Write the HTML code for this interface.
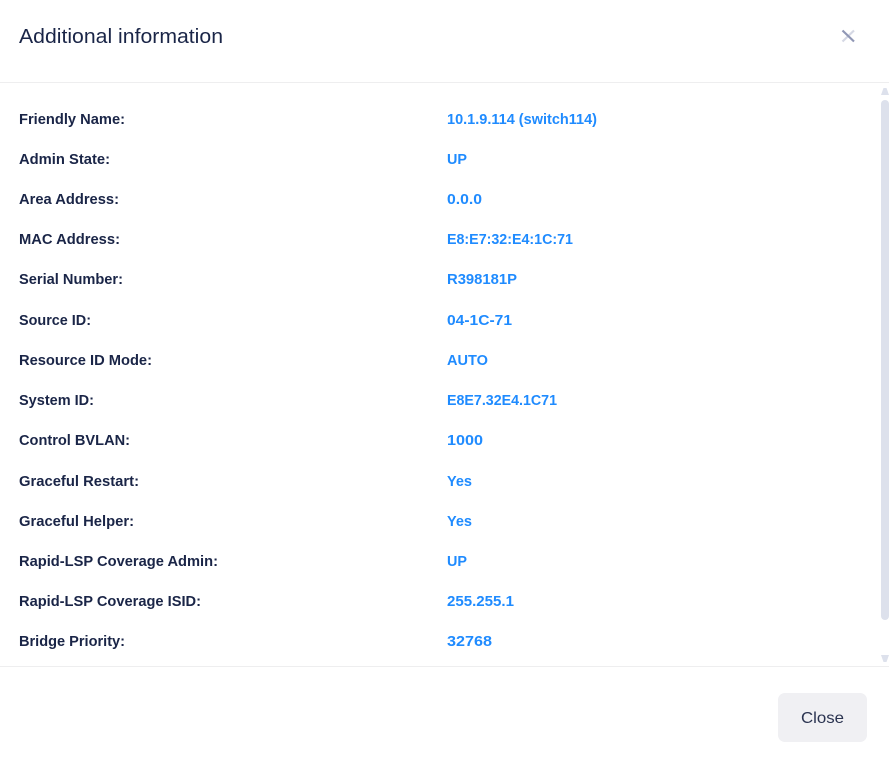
<!DOCTYPE html>
<html>
<head>
<meta charset="utf-8">
<style>
html,body{margin:0;padding:0;background:#fff;width:889px;height:765px;overflow:hidden}
svg{display:block;position:absolute;left:0;top:0}
text{font-family:"Liberation Sans",sans-serif}
.l{font-size:14.5px;font-weight:700;fill:#1a2547}
.v{font-size:14.5px;font-weight:700;fill:#1f8bff}
</style>
</head>
<body>
<svg width="889" height="765" viewBox="0 0 889 765" xmlns="http://www.w3.org/2000/svg">
<rect x="0" y="82" width="889" height="1" fill="#eeeeef"/>
<rect x="0" y="666" width="889" height="1" fill="#eeeeef"/>
<text x="19" y="43" font-size="20" fill="#1a2547" textLength="204" lengthAdjust="spacingAndGlyphs">Additional information</text>
<path d="M854 30.500L842.500 41.500" stroke="#d5d8e4" stroke-width="2.200"/>
<path d="M842.500 30.500L854 41.500" stroke="#9097b5" stroke-width="2.200"/>

<path d="M881 95L883.500 88L886.500 88L889 95Z" fill="#dde1ec"/>
<rect x="881" y="100" width="8" height="520" rx="4" fill="#dde1ec"/>
<path d="M881 655L889 655L886.500 662L883.500 662Z" fill="#dde1ec"/>

<text class="l" x="19" y="124" textLength="106" lengthAdjust="spacingAndGlyphs">Friendly Name:</text>
<text class="v" x="447" y="124" textLength="150" lengthAdjust="spacingAndGlyphs">10.1.9.114 (switch114)</text>
<text class="l" x="19" y="164" textLength="91" lengthAdjust="spacingAndGlyphs">Admin State:</text>
<text class="v" x="447" y="164" textLength="20" lengthAdjust="spacingAndGlyphs">UP</text>
<text class="l" x="19" y="204" textLength="100" lengthAdjust="spacingAndGlyphs">Area Address:</text>
<text class="v" x="447" y="204" textLength="35" lengthAdjust="spacingAndGlyphs">0.0.0</text>
<text class="l" x="19" y="244" textLength="101" lengthAdjust="spacingAndGlyphs">MAC Address:</text>
<text class="v" x="447" y="244" textLength="126" lengthAdjust="spacingAndGlyphs">E8:E7:32:E4:1C:71</text>
<text class="l" x="19" y="284" textLength="104" lengthAdjust="spacingAndGlyphs">Serial Number:</text>
<text class="v" x="447" y="284" textLength="70" lengthAdjust="spacingAndGlyphs">R398181P</text>
<text class="l" x="19" y="325" textLength="72" lengthAdjust="spacingAndGlyphs">Source ID:</text>
<text class="v" x="447" y="325" textLength="65" lengthAdjust="spacingAndGlyphs">04-1C-71</text>
<text class="l" x="19" y="365" textLength="133" lengthAdjust="spacingAndGlyphs">Resource ID Mode:</text>
<text class="v" x="447" y="365" textLength="41" lengthAdjust="spacingAndGlyphs">AUTO</text>
<text class="l" x="19" y="405" textLength="75" lengthAdjust="spacingAndGlyphs">System ID:</text>
<text class="v" x="447" y="405" textLength="110" lengthAdjust="spacingAndGlyphs">E8E7.32E4.1C71</text>
<text class="l" x="19" y="445" textLength="111" lengthAdjust="spacingAndGlyphs">Control BVLAN:</text>
<text class="v" x="447" y="445" textLength="36" lengthAdjust="spacingAndGlyphs">1000</text>
<text class="l" x="19" y="486" textLength="120" lengthAdjust="spacingAndGlyphs">Graceful Restart:</text>
<text class="v" x="447" y="486" textLength="25" lengthAdjust="spacingAndGlyphs">Yes</text>
<text class="l" x="19" y="526" textLength="115" lengthAdjust="spacingAndGlyphs">Graceful Helper:</text>
<text class="v" x="447" y="526" textLength="25" lengthAdjust="spacingAndGlyphs">Yes</text>
<text class="l" x="19" y="566" textLength="199" lengthAdjust="spacingAndGlyphs">Rapid-LSP Coverage Admin:</text>
<text class="v" x="447" y="566" textLength="20" lengthAdjust="spacingAndGlyphs">UP</text>
<text class="l" x="19" y="606" textLength="182" lengthAdjust="spacingAndGlyphs">Rapid-LSP Coverage ISID:</text>
<text class="v" x="447" y="606" textLength="67" lengthAdjust="spacingAndGlyphs">255.255.1</text>
<text class="l" x="19" y="646" textLength="106" lengthAdjust="spacingAndGlyphs">Bridge Priority:</text>
<text class="v" x="447" y="646" textLength="45" lengthAdjust="spacingAndGlyphs">32768</text>

<rect x="778" y="693" width="89" height="49" rx="7" fill="#f0f0f3"/>
<text x="801" y="723" font-size="16" fill="#2a3350" textLength="43" lengthAdjust="spacingAndGlyphs">Close</text>
</svg>
</body>
</html>
